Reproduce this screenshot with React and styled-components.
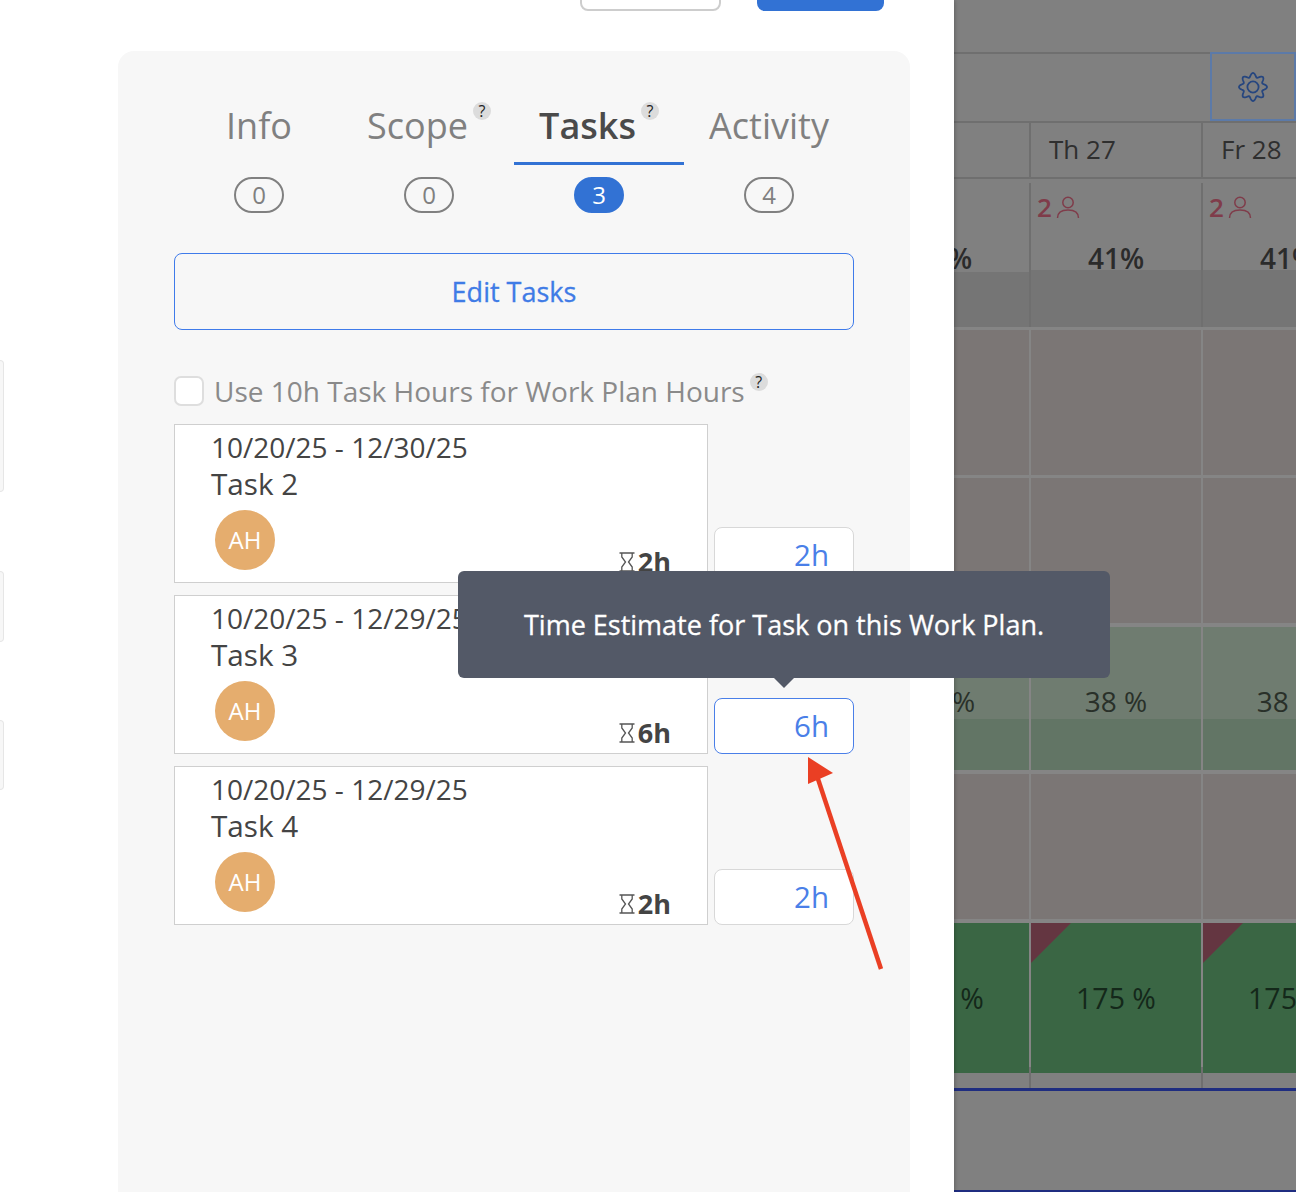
import React from 'react';
import styled, { createGlobalStyle } from 'styled-components';

const tabs = [
    { name: 'Info', count: 0 },
    { name: 'Scope', count: 0, help: true },
    { name: 'Tasks', count: 3, help: true, active: true },
    { name: 'Activity', count: 4 },
];

const tasks = [
    { dates: '10/20/25 - 12/30/25', name: 'Task 2', hours: '2h' },
    { dates: '10/20/25 - 12/29/25', name: 'Task 3', hours: '6h', focused: true },
    { dates: '10/20/25 - 12/29/25', name: 'Task 4', hours: '2h' },
];

const days = ['', 'Th 27', 'Fr 28'];

// eight rounded lobes, first one pointing straight up
const gearPath = Array.from({ length: 145 }, (_, i) => {
    const a = (i / 144) * Math.PI * 2;
    const r = 12 + 2 * Math.cos(8 * a);
    return `${i === 0 ? 'M' : 'L'}${(15 + r * Math.sin(a)).toFixed(2)} ${(15 - r * Math.cos(a)).toFixed(2)}`;
}).join(' ') + 'Z';

const Gear = () => (
    <svg width="30" height="30" viewBox="0 0 30 30" fill="none" stroke="#26467f" strokeWidth="1.8" strokeLinejoin="round">
        <path d={gearPath} />
        <circle cx="15" cy="15" r="5.6" />
    </svg>
);

const Hourglass = () => (
    <svg width="16" height="20" viewBox="0 0 16 20" fill="none" stroke="#555" strokeWidth="1.3">
        <path d="M0.500 1h15M0.500 19h15M2.800 1v4l3.700 5-3.700 5v4M13.200 1v4l-3.700 5 3.700 5v4" />
    </svg>
);

const Person = () => (
    <svg width="24" height="24" viewBox="0 0 24 24" fill="none" stroke="#7f3c4a" strokeWidth="1.5">
        <circle cx="12" cy="7.500" r="5.200" />
        <path d="M1.500 23c0-5.500 4.500-8 10.500-8s10.500 2.500 10.500 8" />
    </svg>
);

const App = () => {
    return (
        <Page>
            <GlobalStyle />
            <Drawer>
                <TopActions>
                    <GhostButton />
                    <PrimaryButton />
                </TopActions>
                <Body>
                    <SideStubs>
                        <Stub $top={309} $height={132} />
                        <Stub $top={79} $height={71} />
                        <Stub $top={78} $height={70} />
                    </SideStubs>
                    <Panel>
                        <Tabs>
                            {tabs.map((t) => (
                                <Tab key={t.name}>
                                    <TabLabel $active={t.active}>
                                        {t.name}
                                        {t.help && <TabHelp>?</TabHelp>}
                                    </TabLabel>
                                    <Count $active={t.active}>{t.count}</Count>
                                </Tab>
                            ))}
                        </Tabs>
                        <EditButton>Edit Tasks</EditButton>
                        <CheckRow>
                            <CheckBox />
                            <CheckLabel>Use 10h Task Hours for Work Plan Hours</CheckLabel>
                            <CheckHelp>?</CheckHelp>
                        </CheckRow>
                        <TaskList>
                            {tasks.map((t) => (
                                <TaskRow key={t.name}>
                                    <TaskCard>
                                        <TaskDates>{t.dates}</TaskDates>
                                        <TaskName>{t.name}</TaskName>
                                        <TaskFooter>
                                            <Avatar>AH</Avatar>
                                            <Duration>
                                                <Hourglass />
                                                {t.hours}
                                            </Duration>
                                        </TaskFooter>
                                    </TaskCard>
                                    <HoursInput $focused={t.focused}>{t.hours}</HoursInput>
                                </TaskRow>
                            ))}
                        </TaskList>
                    </Panel>
                </Body>
            </Drawer>
            <Backdrop>
                <TopStrip />
                <Toolbar>
                    <GearBox>
                        <Gear />
                    </GearBox>
                </Toolbar>
                <HeaderRow>
                    {days.map((d, i) => <HeaderCell key={i}>{d}</HeaderCell>)}
                </HeaderRow>
                <HeaderGap />
                <CellRow $height={144} $mt={0} $line="#6f6f6f">
                    {['41%', '41%', '41%'].map((p, i) => (
                        <LoadCell key={i}>
                            <LoadTop $short={i > 0}>
                                <Assigned>{i > 0 && <>2<Person /></>}</Assigned>
                                <LoadValue>{p}</LoadValue>
                            </LoadTop>
                            <LoadBar />
                        </LoadCell>
                    ))}
                </CellRow>
                <CellRow $height={145} $mt={3}>
                    {days.map((d, i) => <PlainCell key={i} />)}
                </CellRow>
                <CellRow $height={145} $mt={3}>
                    {days.map((d, i) => <PlainCell key={i} />)}
                </CellRow>
                <CellRow $height={143} $mt={4}>
                    {days.map((d, i) => (
                        <SoftCell key={i}>
                            <SoftTop>38 %</SoftTop>
                            <SoftBar />
                        </SoftCell>
                    ))}
                </CellRow>
                <CellRow $height={145} $mt={4}>
                    {days.map((d, i) => <PlainCell key={i} />)}
                </CellRow>
                <CellRow $height={144} $mt={4}>
                    {days.map((d, i) => <StrongCell key={i} $flag={i > 0}>175 %</StrongCell>)}
                </CellRow>
                <Rule />
                <CellRow $height={17} $mt={0} $line="#6f6f6f">
                    {days.map((d, i) => <EmptyCell key={i} />)}
                </CellRow>
                <BlueLine />
                <Footer />
                <BlueLine />
            </Backdrop>
            <Tooltip>Time Estimate for Task on this Work Plan.</Tooltip>
            <ArrowMark width="90" height="220" viewBox="0 0 90 220">
                <path d="M79 213L14 17" stroke="#ea3f24" strokeWidth="4.500" fill="none" />
                <path d="M6 1L6 28L31 17Z" fill="#ea3f24" />
            </ArrowMark>
        </Page>
    );
};

export default App;

const GlobalStyle = createGlobalStyle`
    html, body {
        margin: 0;
        padding: 0;
        background: #fff;
        font-family: "Open Sans", "Liberation Sans", sans-serif;
    }
    * {
        box-sizing: border-box;
    }
`;

const Page = styled.div`
    position: relative;
    display: flex;
    width: 1296px;
    height: 1192px;
    overflow: hidden;
`;

const Drawer = styled.div`
    position: relative;
    z-index: 2;
    width: 954px;
    flex: none;
    background: #fff;
    box-shadow: 0 0 5px rgba(0, 0, 0, 0.35);
`;

const TopActions = styled.div`
    display: flex;
    justify-content: flex-end;
    gap: 36px;
    height: 11px;
    padding-right: 70px;
    margin-bottom: 40px;
    align-items: flex-end;
`;

const GhostButton = styled.div`
    width: 141px;
    height: 40px;
    flex: none;
    border: 2px solid #cdcdcd;
    border-radius: 8px;
    background: #fff;
`;

const PrimaryButton = styled.div`
    width: 127px;
    height: 40px;
    flex: none;
    border-radius: 8px;
    background: #3272d4;
`;

const Body = styled.div`
    display: flex;
`;

const SideStubs = styled.div`
    width: 118px;
    flex: none;
    display: flex;
    flex-direction: column;
    align-items: flex-start;
`;

const Stub = styled.div`
    width: 4px;
    height: ${(p) => p.$height}px;
    margin-top: ${(p) => p.$top}px;
    background: #f7f7f7;
    border: 1px solid #e6e6e6;
    border-left: none;
    border-radius: 0 6px 6px 0;
`;

const Panel = styled.div`
    width: 792px;
    height: 1141px;
    padding: 40px 56px 0;
    background: #f7f7f7;
    border-radius: 16px 16px 0 0;
`;

const Tabs = styled.div`
    display: grid;
    grid-template-columns: repeat(4, 170px);
`;

const Tab = styled.div`
    display: flex;
    flex-direction: column;
    align-items: center;
`;

const TabLabel = styled.div`
    width: 100%;
    height: 74px;
    padding-top: 10px;
    display: flex;
    justify-content: center;
    gap: 5px;
    font-size: 36px;
    line-height: 49px;
    color: ${(p) => (p.$active ? '#4a4a4a' : '#808080')};
    font-weight: ${(p) => (p.$active ? 600 : 400)};
    border-bottom: 3px solid ${(p) => (p.$active ? '#3272d4' : 'transparent')};
`;

const HelpDot = styled.span`
    width: 18px;
    height: 18px;
    flex: none;
    border-radius: 50%;
    background: #dcdcdc;
    color: #222;
    font-size: 16px;
    font-weight: 400;
    line-height: 18px;
    text-align: center;
`;

const TabHelp = styled(HelpDot)`
    margin-top: 1px;
`;

const CheckHelp = styled(HelpDot)`
    margin: -18px 0 0 -5px;
`;

const Count = styled.div`
    width: 50px;
    height: 36px;
    margin-top: 12px;
    border-radius: 18px;
    border: 2px solid ${(p) => (p.$active ? '#3272d4' : '#808080')};
    background: ${(p) => (p.$active ? '#3272d4' : 'transparent')};
    color: ${(p) => (p.$active ? '#fff' : '#808080')};
    font-size: 24px;
    line-height: 32px;
    text-align: center;
`;

const EditButton = styled.div`
    height: 77px;
    margin-top: 40px;
    border: 1px solid #3f7bea;
    border-radius: 8px;
    color: #3f7be6;
    font-size: 27px;
    font-weight: 500;
    -webkit-text-stroke: 0.3px #3f7be6;
    line-height: 75px;
    text-align: center;
`;

const CheckRow = styled.div`
    display: flex;
    align-items: center;
    gap: 10px;
    height: 30px;
    margin-top: 46px;
`;

const CheckBox = styled.div`
    width: 30px;
    height: 30px;
    flex: none;
    border: 2px solid #dedede;
    border-radius: 7px;
    background: #fff;
`;

const CheckLabel = styled.div`
    color: #8a8a8a;
    font-size: 28px;
    line-height: 32px;
    white-space: nowrap;
`;

const TaskList = styled.div`
    display: flex;
    flex-direction: column;
    gap: 12px;
    margin-top: 18px;
`;

const TaskRow = styled.div`
    display: flex;
    align-items: flex-end;
    gap: 6px;
`;

const TaskCard = styled.div`
    width: 534px;
    height: 159px;
    padding: 4px 36px 0 36px;
    background: #fff;
    border: 1px solid #cfcfcf;
    color: #444;
`;

const TaskDates = styled.div`
    font-size: 28px;
    line-height: 37px;
    white-space: nowrap;
`;

const TaskName = styled.div`
    font-size: 29.7px;
    line-height: 36px;
`;

const TaskFooter = styled.div`
    display: flex;
    justify-content: space-between;
    align-items: flex-end;
    margin-top: 8px;
    padding-left: 4px;
`;

const Avatar = styled.div`
    width: 60px;
    height: 60px;
    border-radius: 50%;
    background: #e5ad6e;
    color: #fff;
    font-size: 24px;
    line-height: 60px;
    text-align: center;
`;

const Duration = styled.div`
    display: flex;
    align-items: center;
    gap: 3px;
    margin-bottom: -10px;
    font-size: 27px;
    font-weight: 700;
    line-height: 36px;
    color: #444;
`;

const HoursInput = styled.div`
    width: 140px;
    height: 56px;
    padding-right: 24px;
    background: #fff;
    border: 1px solid ${(p) => (p.$focused ? '#4a7fe8' : '#d8d8d8')};
    border-radius: 8px;
    color: #4a7fe8;
    font-size: 29.5px;
    line-height: 54px;
    text-align: right;
`;

const Tooltip = styled.div`
    position: absolute;
    z-index: 3;
    left: 458px;
    top: 571px;
    width: 652px;
    height: 107px;
    background: #535967;
    border-radius: 6px;
    color: #fff;
    font-size: 27px;
    font-weight: 500;
    -webkit-text-stroke: 0.3px #fff;
    line-height: 107px;
    text-align: center;
    &::after {
        content: "";
        position: absolute;
        left: 316px;
        bottom: -10px;
        border-left: 10px solid transparent;
        border-right: 10px solid transparent;
        border-top: 10px solid #535967;
    }
`;

const ArrowMark = styled.svg`
    position: absolute;
    z-index: 4;
    left: 802px;
    top: 756px;
`;

const Backdrop = styled.div`
    width: 342px;
    flex: none;
    height: 1192px;
    overflow: hidden;
    background: #858585;
`;

const TopStrip = styled.div`
    height: 54px;
    background: #808080;
    border-bottom: 2px solid #6f6f6f;
`;

const Toolbar = styled.div`
    display: flex;
    justify-content: flex-end;
    height: 67px;
    background: #808080;
`;

const GearBox = styled.div`
    display: flex;
    align-items: center;
    justify-content: center;
    width: 86px;
    height: 69px;
    border: 2px solid #5c7aa8;
    margin-top: -2px;
`;

const rowGrid = `
    display: grid;
    grid-template-columns: repeat(3, 170px);
    column-gap: 2px;
    margin-left: -95px;
`;

const HeaderRow = styled.div`
    ${rowGrid}
    height: 58px;
    padding: 2px 0;
    background: #6f6f6f;
`;

const HeaderCell = styled.div`
    padding-left: 18px;
    background: #808080;
    color: #2f2f2f;
    font-size: 26px;
    line-height: 52px;
`;

const HeaderGap = styled.div`
    height: 4px;
    background: #808080;
`;

const CellRow = styled.div`
    ${rowGrid}
    height: ${(p) => p.$height}px;
    margin-top: ${(p) => p.$mt}px;
    background: ${(p) => p.$line || 'transparent'};
`;

const LoadCell = styled.div`
    display: flex;
    flex-direction: column;
`;

const LoadTop = styled.div`
    height: ${(p) => (p.$short ? 87 : 89)}px;
    padding: 8px 6px 0;
    background: #808080;
`;

const Assigned = styled.div`
    display: flex;
    align-items: center;
    gap: 4px;
    height: 32px;
    color: #7f3c4a;
    font-size: 26px;
    font-weight: 600;
`;

const LoadValue = styled.div`
    margin-top: 17px;
    color: #2b2b2b;
    font-size: 28px;
    font-weight: 600;
    line-height: 36px;
    text-align: center;
`;

const LoadBar = styled.div`
    flex: 1;
    background: #757575;
`;

const PlainCell = styled.div`
    background: #7b7675;
`;

const SoftCell = styled.div`
    display: flex;
    flex-direction: column;
`;

const SoftTop = styled.div`
    height: 92px;
    padding-top: 56px;
    background: #6f7c70;
    color: #293029;
    font-size: 28px;
    line-height: 36px;
    text-align: center;
`;

const SoftBar = styled.div`
    flex: 1;
    background: #627565;
`;

const StrongCell = styled.div`
    position: relative;
    background: #3a6644;
    color: #14281a;
    font-size: 28.5px;
    line-height: 150px;
    text-align: center;
    &::before {
        content: "";
        display: ${(p) => (p.$flag ? 'block' : 'none')};
        position: absolute;
        left: 0;
        top: 0;
        width: 40px;
        height: 40px;
        background: #643641;
        clip-path: polygon(0 0, 100% 0, 0 100%);
    }
`;

const Rule = styled.div`
    height: 4px;
    background: #6f6f6f;
`;

const EmptyCell = styled.div`
    background: #808080;
`;

const BlueLine = styled.div`
    height: 3px;
    background: #1f2d80;
`;

const Footer = styled.div`
    height: 99px;
    background: #808080;
`;
